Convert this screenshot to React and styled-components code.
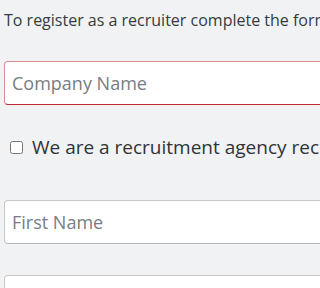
import React from "react";
import styled, { createGlobalStyle } from "styled-components";

const GlobalStyle = createGlobalStyle`
  html, body {
    margin: 0;
    padding: 0;
    background: #f1f2f4;
    overflow: hidden;
  }
  body {
    font-family: "Open Sans", "Liberation Sans", sans-serif;
    color: #333;
  }
`;

const Page = styled.div`
  width: 100vw;
  height: 100vh;
  overflow: hidden;
`;

const Form = styled.form`
  width: 640px;
  padding: 10px 0 0 4px;
  display: flex;
  flex-direction: column;
`;

const Intro = styled.p`
  margin: 0;
  font-size: 16px;
  line-height: 20px;
  white-space: nowrap;
  color: #353b40;
`;

const Field = styled.input`
  box-sizing: border-box;
  width: 100%;
  height: 44px;
  margin-top: ${(p) => p.$top || 0}px;
  padding: 0 7px;
  font-family: inherit;
  font-size: 18px;
  color: #333;
  background: #fff;
  border: 1px solid ${(p) => (p.$error ? "#dd8a90" : "#c8c8c8")};
  border-bottom-color: ${(p) => (p.$error ? "#c42634" : "#b8b8b8")};
  border-radius: 4px;
  outline: none;
  &::placeholder {
    color: #777d83;
  }
`;

const CheckRow = styled.label`
  display: flex;
  align-items: center;
  margin-top: 29px;
  font-size: 19px;
  line-height: 26px;
  white-space: nowrap;
  color: #2f3438;
`;

const Check = styled.input`
  flex: none;
  width: 13px;
  height: 13px;
  margin: 0 9px 0 6px;
`;

export default function App() {
  return (
    <Page>
      <GlobalStyle />
      <Form onSubmit={(e) => e.preventDefault()}>
        <Intro>
          To register as a recruiter complete the form below and we will be in touch.
        </Intro>
        <Field $top={31} $error placeholder="Company Name" />
        <CheckRow>
          <Check type="checkbox" />
          We are a recruitment agency recruiting on behalf of a client
        </CheckRow>
        <Field $top={40} placeholder="First Name" />
        <Field $top={31} placeholder="Last Name" />
      </Form>
    </Page>
  );
}
